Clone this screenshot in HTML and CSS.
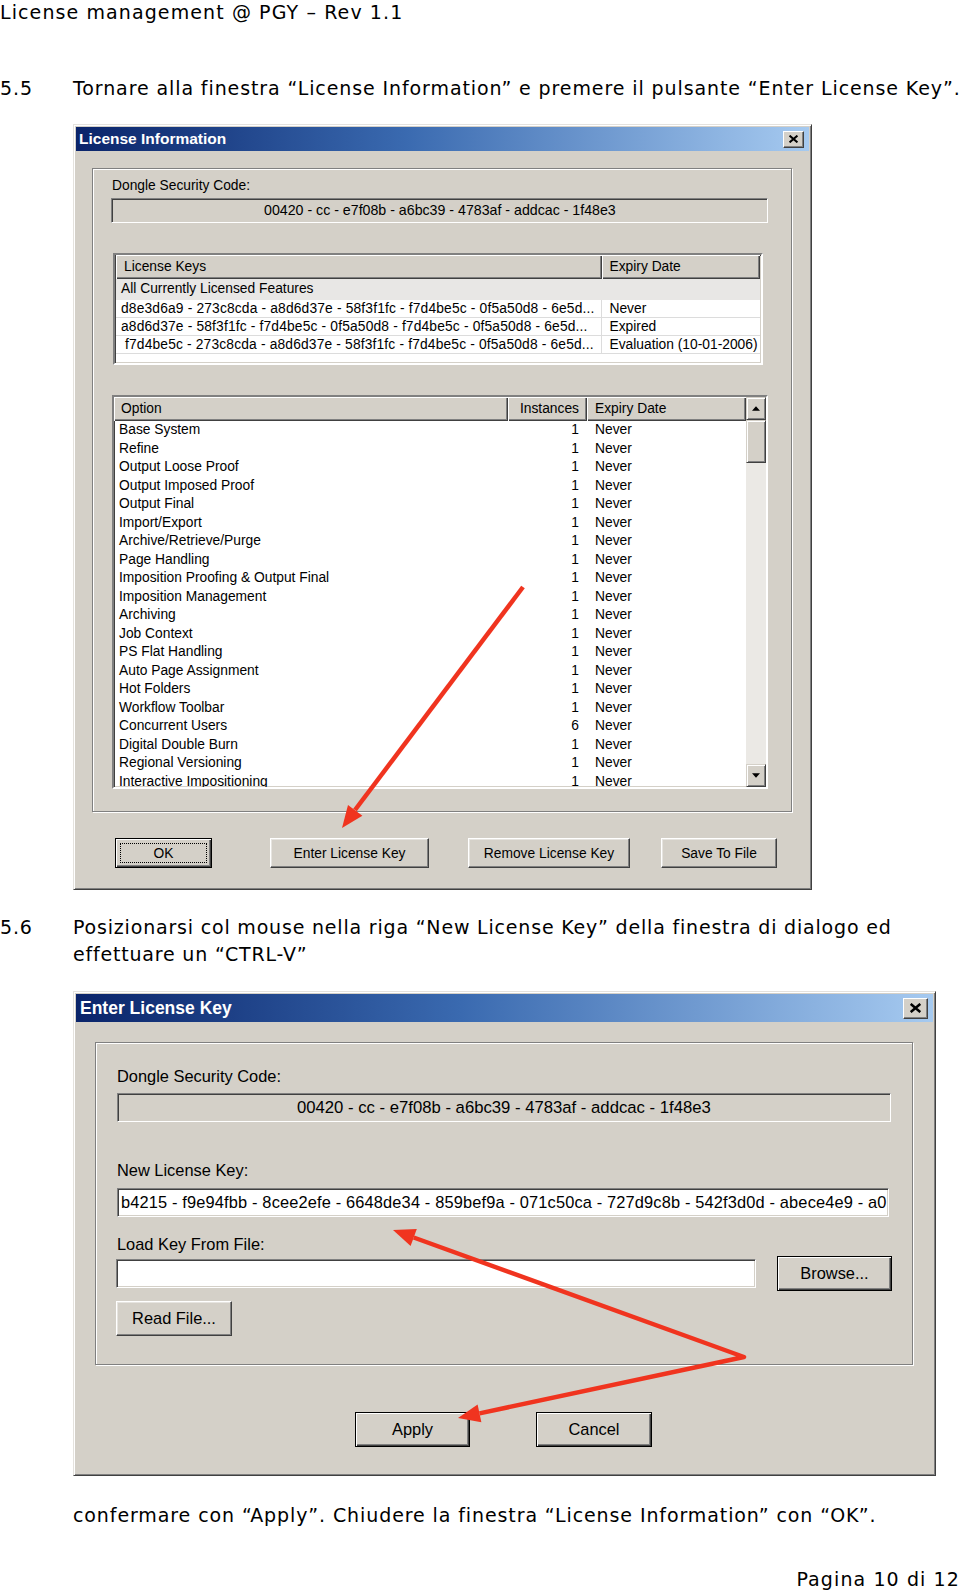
FILE: index.html
```html
<!DOCTYPE html>
<html lang="it">
<head>
  <meta charset="UTF-8" />
  <title>License management @ PGY – Rev 1.1</title>
  <link rel="stylesheet" href="styles.css">
</head>
<body>
  <div class="running-head">License management @ PGY – Rev 1.1</div>

  <div class="step step-55">
    <span class="num">5.5</span>
    <span class="txt">Tornare alla finestra “License Information” e premere il pulsante “Enter License Key”.</span>
  </div>

  <div class="shot shot-info">
    <div class="win win-info">
      <div class="titlebar">
        <span>License Information</span>
        <span class="close"><svg viewBox="0 0 8 7"><path d="M0.5 0.5 L7.5 6.5 M7.5 0.5 L0.5 6.5"/></svg></span>
      </div>
      <div class="win-body">
        <div class="group">
          <div class="label">Dongle Security Code:</div>
          <div class="codebox">00420 - cc - e7f08b - a6bc39 - 4783af - addcac - 1f48e3</div>

          <div class="list keys">
            <div class="lv-head">
              <span class="c-key">License Keys</span>
              <span class="c-kexp">Expiry Date</span>
            </div>
            <div class="k-row k-all"><span class="c-key">All Currently Licensed Features</span><span class="c-kexp"></span></div>
            <div class="k-row"><span class="c-key">d8e3d6a9 - 273c8cda - a8d6d37e - 58f3f1fc - f7d4be5c - 0f5a50d8 - 6e5d...</span><span class="c-kexp">Never</span></div>
            <div class="k-row"><span class="c-key">a8d6d37e - 58f3f1fc - f7d4be5c - 0f5a50d8 - f7d4be5c - 0f5a50d8 - 6e5d...</span><span class="c-kexp">Expired</span></div>
            <div class="k-row"><span class="c-key indent">f7d4be5c - 273c8cda - a8d6d37e - 58f3f1fc - f7d4be5c - 0f5a50d8 - 6e5d...</span><span class="c-kexp">Evaluation (10-01-2006)</span></div>
          </div>

          <div class="list opts">
            <div class="lv-main">
              <div class="lv-head">
                <span class="c-opt">Option</span>
                <span class="c-inst">Instances</span>
                <span class="c-exp">Expiry Date</span>
              </div>
              <div class="lv-body">
                <div class="o-row"><span class="c-opt">Base System</span><span class="c-inst">1</span><span class="c-exp">Never</span></div>
                <div class="o-row"><span class="c-opt">Refine</span><span class="c-inst">1</span><span class="c-exp">Never</span></div>
                <div class="o-row"><span class="c-opt">Output Loose Proof</span><span class="c-inst">1</span><span class="c-exp">Never</span></div>
                <div class="o-row"><span class="c-opt">Output Imposed Proof</span><span class="c-inst">1</span><span class="c-exp">Never</span></div>
                <div class="o-row"><span class="c-opt">Output Final</span><span class="c-inst">1</span><span class="c-exp">Never</span></div>
                <div class="o-row"><span class="c-opt">Import/Export</span><span class="c-inst">1</span><span class="c-exp">Never</span></div>
                <div class="o-row"><span class="c-opt">Archive/Retrieve/Purge</span><span class="c-inst">1</span><span class="c-exp">Never</span></div>
                <div class="o-row"><span class="c-opt">Page Handling</span><span class="c-inst">1</span><span class="c-exp">Never</span></div>
                <div class="o-row"><span class="c-opt">Imposition Proofing &amp; Output Final</span><span class="c-inst">1</span><span class="c-exp">Never</span></div>
                <div class="o-row"><span class="c-opt">Imposition Management</span><span class="c-inst">1</span><span class="c-exp">Never</span></div>
                <div class="o-row"><span class="c-opt">Archiving</span><span class="c-inst">1</span><span class="c-exp">Never</span></div>
                <div class="o-row"><span class="c-opt">Job Context</span><span class="c-inst">1</span><span class="c-exp">Never</span></div>
                <div class="o-row"><span class="c-opt">PS Flat Handling</span><span class="c-inst">1</span><span class="c-exp">Never</span></div>
                <div class="o-row"><span class="c-opt">Auto Page Assignment</span><span class="c-inst">1</span><span class="c-exp">Never</span></div>
                <div class="o-row"><span class="c-opt">Hot Folders</span><span class="c-inst">1</span><span class="c-exp">Never</span></div>
                <div class="o-row"><span class="c-opt">Workflow Toolbar</span><span class="c-inst">1</span><span class="c-exp">Never</span></div>
                <div class="o-row"><span class="c-opt">Concurrent Users</span><span class="c-inst">6</span><span class="c-exp">Never</span></div>
                <div class="o-row"><span class="c-opt">Digital Double Burn</span><span class="c-inst">1</span><span class="c-exp">Never</span></div>
                <div class="o-row"><span class="c-opt">Regional Versioning</span><span class="c-inst">1</span><span class="c-exp">Never</span></div>
                <div class="o-row"><span class="c-opt">Interactive Impositioning</span><span class="c-inst">1</span><span class="c-exp">Never</span></div>
              </div>
            </div>
            <div class="vscroll">
              <div class="sb-btn sb-up"><svg viewBox="0 0 7 4"><path d="M0 4 L3.5 0 L7 4 Z"/></svg></div>
              <div class="sb-thumb"></div>
              <div class="sb-track"></div>
              <div class="sb-btn sb-down"><svg viewBox="0 0 7 4"><path d="M0 0 L3.5 4 L7 0 Z"/></svg></div>
            </div>
          </div>
        </div>

        <div class="btn-row">
          <div class="btn default b-ok"><span class="focus">OK</span></div>
          <div class="btn b-enter">Enter License Key</div>
          <div class="btn b-remove">Remove License Key</div>
          <div class="btn b-save">Save To File</div>
        </div>
      </div>
    </div>
    <svg class="arrows" viewBox="0 0 739 766" width="739" height="766">
      <line x1="450" y1="463" x2="282" y2="686" />
      <polygon points="269,704 289.4,691.8 275,681" />
    </svg>
  </div>

  <div class="step step-56">
    <span class="num">5.6</span>
    <span class="txt">Posizionarsi col mouse nella riga “New License Key” della finestra di dialogo ed<br>effettuare un “CTRL-V”</span>
  </div>

  <div class="shot shot-enter">
    <div class="win win-enter">
      <div class="titlebar">
        <span>Enter License Key</span>
        <span class="close"><svg viewBox="0 0 8 7"><path d="M0.5 0.5 L7.5 6.5 M7.5 0.5 L0.5 6.5"/></svg></span>
      </div>
      <div class="win-body">
        <div class="group">
          <div class="label l-dongle">Dongle Security Code:</div>
          <div class="codebox">00420 - cc - e7f08b - a6bc39 - 4783af - addcac - 1f48e3</div>
          <div class="label l-new">New License Key:</div>
          <div class="field key-field">b4215 - f9e94fbb - 8cee2efe - 6648de34 - 859bef9a - 071c50ca - 727d9c8b - 542f3d0d - abece4e9 - a0</div>
          <div class="label l-load">Load Key From File:</div>
          <div class="file-row">
            <div class="field file-field"></div>
            <div class="btn framed b-browse">Browse...</div>
          </div>
          <div class="btn b-read">Read File...</div>
        </div>
        <div class="btn-row">
          <div class="btn framed b-apply">Apply</div>
          <div class="btn framed b-cancel">Cancel</div>
        </div>
      </div>
    </div>
    <svg class="arrows" viewBox="0 0 863 485" width="863" height="485">
      <polyline points="340.7,246.5 671,366 406.5,422.4" />
      <polygon points="320,239 343.8,238 337.6,255" />
      <polygon points="385,427 408.4,431.2 404.6,413.6" />
    </svg>
  </div>

  <p class="closing">confermare con “Apply”. Chiudere la finestra “License Information” con “OK”.</p>

  <div class="page-no">Pagina 10 di 12</div>
</body>
</html>
```

FILE: styles.css
```css
* {
  box-sizing: border-box;
  margin: 0;
  padding: 0;
}
body {
  width: 960px;
  background: #fff;
  color: #000;
  font-family: "DejaVu Sans", Verdana, sans-serif;
  font-size: 19px;
  letter-spacing: 0.9px;
}

/* document text */
.running-head {
  line-height: 25px;
  white-space: nowrap;
  letter-spacing: 1.1px;
}
.step {
  display: flex;
  line-height: 27px;
  white-space: nowrap;
}
.step .num {
  width: 73px;
  flex: none;
}
.step-55 {
  margin-top: 50px;
}
.step-56 {
  margin-top: 24px;
  letter-spacing: 0.81px;
}
.closing {
  margin: 26px 0 0 73px;
  line-height: 27px;
  white-space: nowrap;
}
.page-no {
  margin-top: 37px;
  line-height: 27px;
  text-align: right;
  letter-spacing: 1.1px;
}

/* screenshots */
.shot {
  position: relative;
  margin-left: 73px;
}
.shot-info {
  margin-top: 22px;
}
.shot-enter {
  margin-top: 23px;
}
.arrows {
  position: absolute;
  left: 0;
  top: 0;
  pointer-events: none;
}
.arrows line,
.arrows polyline {
  fill: none;
  stroke: #f0341f;
  stroke-width: 4.5;
  stroke-linejoin: round;
}
.arrows polygon {
  fill: #f0341f;
}

/* classic window */
.win {
  background: #d4d0c8;
  border: 1px solid;
  border-color: #e4e2de #404040 #404040 #e4e2de;
  box-shadow: inset 1px 1px 0 #fff, inset -1px -1px 0 #808080;
  padding: 2px;
  font-family: "Liberation Sans", Arial, sans-serif;
  letter-spacing: 0;
  color: #000;
}
.win-info {
  width: 739px;
  height: 766px;
  font-size: 13.8px;
}
.win-enter {
  width: 863px;
  height: 485px;
  font-size: 16.4px;
}
.titlebar {
  display: flex;
  align-items: center;
  justify-content: space-between;
  background: linear-gradient(90deg, #0a246a 0%, #3a6ab0 45%, #a6caf0 100%);
  color: #fff;
  font-weight: bold;
  padding: 0 5px 0 3px;
}
.win-info .titlebar {
  height: 24px;
  font-size: 15.5px;
}
.win-enter .titlebar {
  height: 28px;
  font-size: 17.5px;
  padding-left: 4px;
}
.close {
  display: flex;
  align-items: center;
  justify-content: center;
  background: #d4d0c8;
  border: 1px solid;
  border-color: #fff #404040 #404040 #fff;
  box-shadow: inset -1px -1px 0 #808080;
}
.win-info .close {
  width: 21px;
  height: 17px;
}
.win-enter .close {
  width: 25px;
  height: 21px;
}
.close svg {
  width: 9px;
  height: 8px;
  stroke: #000;
  stroke-width: 1.8;
}
.win-enter .close svg {
  width: 11px;
  height: 10px;
}

.group {
  border: 1px solid #808080;
  box-shadow: 1px 1px 0 #fff, inset 1px 1px 0 #fff;
}
.win-info .win-body {
  padding: 17px 17px 0 16px;
}
.win-info .group {
  height: 644px;
  padding-left: 19px;
}
.win-enter .win-body {
  padding: 20px 20px 0 19px;
}
.win-enter .group {
  height: 323px;
  padding-left: 21px;
}

.label {
  line-height: 16px;
}
.win-info .label {
  margin-top: 9px;
}
.win-enter .label {
  line-height: 19px;
}
.l-dongle {
  margin-top: 24px;
}
.l-new {
  margin-top: 39px;
}
.l-load {
  margin-top: 18px;
}

.codebox {
  border: 1px solid;
  border-color: #808080 #fff #fff #808080;
  box-shadow: inset 1px 1px 0 #404040;
  white-space: nowrap;
}
.win-info .codebox {
  width: 657px;
  height: 25px;
  margin: 4px 0 0 -1px;
  padding-left: 152px;
  line-height: 23px;
  font-size: 14.2px;
}
.win-enter .codebox {
  width: 774px;
  height: 29px;
  margin-top: 7px;
  padding-left: 179px;
  line-height: 27px;
  font-size: 16.7px;
}

.field {
  background: #fff;
  border: 1px solid;
  border-color: #808080 #fff #fff #808080;
  box-shadow: inset 1px 1px 0 #404040, inset -1px -1px 0 #d4d0c8;
  white-space: nowrap;
  overflow: hidden;
}
.key-field {
  width: 772px;
  height: 29px;
  margin-top: 8px;
  padding-left: 3px;
  line-height: 27px;
  letter-spacing: 0.15px;
}
.file-row {
  display: flex;
  align-items: center;
  margin-top: 2px;
  height: 35px;
}
.file-field {
  width: 640px;
  height: 29px;
  margin-left: -1px;
}

/* list views */
.list {
  background: #fff;
  border: 2px solid;
  border-color: #808080 #fff #fff #808080;
  box-shadow: inset 1px 1px 0 #404040, inset -1px -1px 0 #d4d0c8;
  overflow: hidden;
  white-space: nowrap;
}
.lv-head {
  display: flex;
  background: #d4d0c8;
}
.lv-head span {
  box-shadow: inset 1px 1px 0 #fff, inset -1px -1px 0 #404040, inset -2px -2px 0 #808080;
}
.keys {
  width: 650px;
  height: 112px;
  margin: 30px 0 0 1px;
  padding: 0 1px;
}
.keys .lv-head {
  height: 24px;
  line-height: 24px;
}
.c-key {
  width: 488px;
  padding-left: 8px;
}
.c-kexp {
  width: 158px;
  padding-left: 7px;
}
.k-row {
  display: flex;
  height: 18px;
  line-height: 17px;
}
.k-row span {
  border-bottom: 1px solid #dcdcdc;
}
.k-row .c-key {
  padding-left: 5px;
  border-right: 1px solid #dcdcdc;
  letter-spacing: 0.16px;
}
.k-row .c-key.indent {
  padding-left: 9px;
}
.k-all {
  height: 21px;
  line-height: 20px;
  background: #e8e7e5;
}
.k-all span {
  border: none;
}
.k-all .c-key {
  border: none;
  letter-spacing: 0;
}

.opts {
  display: flex;
  width: 656px;
  height: 394px;
  margin-top: 30px;
}
.lv-main {
  width: 632px;
}
.opts .lv-head {
  height: 24px;
  line-height: 24px;
}
.c-opt {
  width: 394px;
  padding-left: 7px;
}
.c-inst {
  width: 79px;
  text-align: right;
  padding-right: 8px;
}
.c-exp {
  width: 159px;
  padding-left: 8px;
}
.o-row {
  display: flex;
  height: 18.5px;
  line-height: 18px;
}
.o-row .c-opt {
  padding-left: 5px;
}
.vscroll {
  display: flex;
  flex-direction: column;
  width: 20px;
  background: #d4d0c8;
}
.sb-btn,
.sb-thumb {
  display: flex;
  align-items: center;
  justify-content: center;
  background: #d4d0c8;
  border: 1px solid;
  border-color: #d4d0c8 #404040 #404040 #d4d0c8;
  box-shadow: inset 1px 1px 0 #fff, inset -1px -1px 0 #808080;
}
.sb-btn {
  height: 23px;
}
.sb-btn svg {
  width: 8px;
  height: 5px;
  fill: #000;
}
.sb-thumb {
  height: 43px;
}
.sb-track {
  flex: 1;
  background: #ebe9e5;
}

/* buttons */
.btn {
  display: flex;
  align-items: center;
  justify-content: center;
  background: #d4d0c8;
  border: 1px solid;
  border-color: #fff #404040 #404040 #fff;
  box-shadow: inset -1px -1px 0 #808080, inset 1px 1px 0 #e6e4e0;
  white-space: nowrap;
}
.btn.default,
.btn.framed {
  border-color: #000;
  box-shadow: inset 1px 1px 0 #fff, inset -1px -1px 0 #404040, inset -2px -2px 0 #808080;
}
.btn-row {
  display: flex;
}
.win-info .btn-row {
  margin-top: 26px;
  margin-left: -16px;
}
.win-info .btn {
  height: 30px;
}
.b-ok {
  width: 97px;
  margin-left: 39px;
  padding: 4px;
}
.focus {
  flex: 1;
  align-self: stretch;
  display: flex;
  align-items: center;
  justify-content: center;
  border: 1px dotted #000;
}
.b-enter {
  width: 159px;
  margin-left: 58px;
}
.b-remove {
  width: 162px;
  margin-left: 39px;
}
.b-save {
  width: 116px;
  margin-left: 31px;
}

.win-enter .btn {
  height: 35px;
}
.b-browse {
  width: 115px;
  margin-left: 21px;
}
.b-read {
  width: 116px;
  margin: 10px 0 0 -1px;
}
.win-enter .btn-row {
  margin-top: 47px;
  margin-left: -19px;
}
.b-apply {
  width: 115px;
  margin-left: 279px;
}
.b-cancel {
  width: 116px;
  margin-left: 66px;
}
```
